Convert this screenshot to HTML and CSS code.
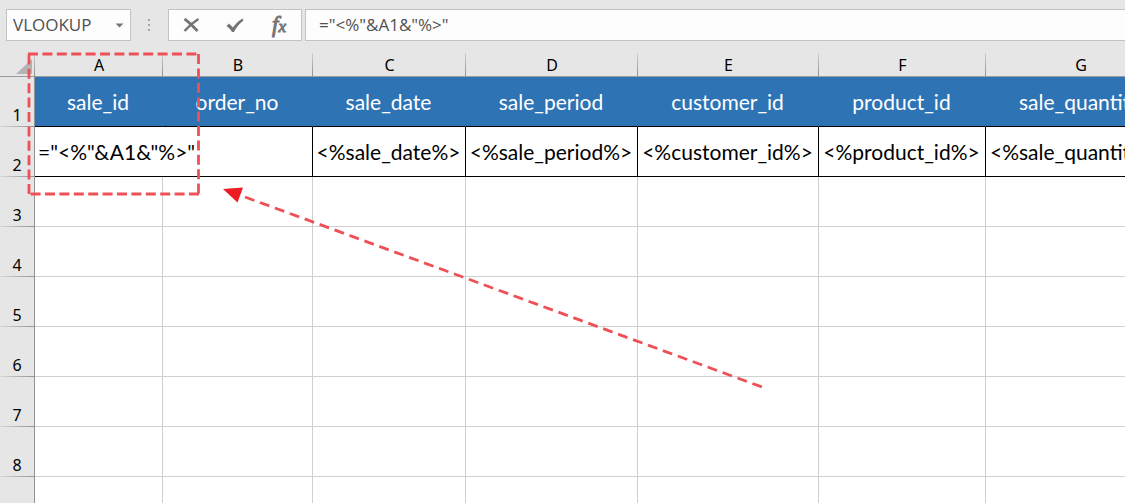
FILE: index.html
```
<!DOCTYPE html>
<html lang="en">
<head>
  <meta charset="UTF-8">
  <meta name="viewport" content="width=device-width, initial-scale=1.0">
  <title>Spreadsheet - VLOOKUP</title>
  <link rel="stylesheet" href="styles.css">
</head>
<body>
  <div class="formula-bar">
    <div class="name-box">
      <input class="name-input" type="text" value="VLOOKUP" aria-label="Name box">
      <button class="name-toggle" aria-label="Open name list">
        <svg width="9" height="5" viewBox="0 0 9 5"><path d="M0.5 0.5h8l-4 4z" fill="#777"/></svg>
      </button>
    </div>
    <svg class="grip" width="3" height="13" viewBox="0 0 3 13" fill="#a6a6a6"><path d="M0 0h2v2H0zM0 5h2v2H0zM0 10h2v2H0z"/></svg>
    <div class="actions">
      <button aria-label="Cancel">
        <svg width="17" height="16" viewBox="0 0 17 16" fill="none" stroke="#757575"><path d="M1.5 2Q6 5 14.5 14" stroke-width="2.8"/><path d="M15.5 2Q8 6.5 1.5 14" stroke-width="2.4"/></svg>
      </button>
      <button aria-label="Enter">
        <svg width="18" height="16" viewBox="0 0 18 16"><path d="M0.5 9L3 6.500L7 10.500Q11 4.500 16.500 1.500L17.500 3.500Q11.500 8 8 15H6Q3.500 11 0.500 9z" fill="#757575"/></svg>
      </button>
      <button class="fx" aria-label="Insert function"><i>f</i><i class="fx-sub">x</i></button>
    </div>
    <input class="formula-input" type="text" value="=&quot;&lt;%&quot;&amp;A1&amp;&quot;%&gt;&quot;" aria-label="Formula">
  </div>

  <div class="sheet">
    <table class="grid">
      <colgroup>
        <col class="col-row"><col class="col-a"><col class="col-b"><col class="col-c"><col class="col-d"><col class="col-e"><col class="col-f"><col class="col-g">
      </colgroup>
      <thead>
        <tr>
          <th class="corner"><svg width="16" height="16" viewBox="0 0 16 16"><path d="M16 0v15H0z" fill="#b4b4b4"/></svg></th>
          <th>A</th><th>B</th><th>C</th><th>D</th><th>E</th><th>F</th><th>G</th>
        </tr>
      </thead>
      <tbody>
        <tr class="titles"><th>1</th><td>sale_id</td><td>order_no</td><td>sale_date</td><td>sale_period</td><td>customer_id</td><td>product_id</td><td>sale_quantity</td></tr>
        <tr class="fields"><th>2</th><td class="editing" colspan="2">="&lt;%"&amp;A1&amp;"%&gt;"</td><td>&lt;%sale_date%&gt;</td><td>&lt;%sale_period%&gt;</td><td>&lt;%customer_id%&gt;</td><td>&lt;%product_id%&gt;</td><td>&lt;%sale_quantity%&gt;</td></tr>
        <tr><th>3</th><td></td><td></td><td></td><td></td><td></td><td></td><td></td></tr>
        <tr><th>4</th><td></td><td></td><td></td><td></td><td></td><td></td><td></td></tr>
        <tr><th>5</th><td></td><td></td><td></td><td></td><td></td><td></td><td></td></tr>
        <tr><th>6</th><td></td><td></td><td></td><td></td><td></td><td></td><td></td></tr>
        <tr><th>7</th><td></td><td></td><td></td><td></td><td></td><td></td><td></td></tr>
        <tr><th>8</th><td></td><td></td><td></td><td></td><td></td><td></td><td></td></tr>
        <tr><th></th><td></td><td></td><td></td><td></td><td></td><td></td><td></td></tr>
      </tbody>
    </table>
  </div>

  <!-- callout box and arrow over the grid -->
  <svg class="callout" width="780" height="400" viewBox="0 0 780 400" fill="none">
    <g stroke="#ee5057" stroke-width="2.8" stroke-dasharray="10 4.4">
      <path d="M28 54H199"/>
      <path d="M198.500 54V194"/>
      <path d="M199 194H29"/>
      <path d="M29 194V54"/>
      <path stroke-dasharray="10 5.900" d="M245 197L762 387"/>
    </g>
    <path d="M223 189L243 187.500L237.500 202.500z" fill="#ed1c24"/>
  </svg>
</body>
</html>
```
FILE: styles.css
```
* { box-sizing: border-box; }
body {
  margin: 0;
  height: 100vh;
  overflow: hidden;
  background: #e6e6e6;
  font-family: "Noto Sans", "Open Sans", sans-serif;
  color: #000;
}
button {
  border: none;
  background: none;
  padding: 0;
  cursor: pointer;
}
input {
  border: none;
  outline: none;
  background: none;
  padding: 0;
  min-width: 0;
  font-family: "Open Sans", "Noto Sans", sans-serif;
  font-size: 17px;
  color: #505050;
}

/* Formula bar */
.formula-bar {
  display: flex;
  align-items: center;
  height: 53px;
  padding: 9px 0 12px 6px;
}
.name-box,
.actions,
.formula-input {
  height: 32px;
  background: #fdfdfd;
  border: 1px solid #c3c3c3;
}
.name-box {
  display: flex;
  width: 125px;
  padding-left: 6px;
}
.name-input {
  flex: 1;
  padding-bottom: 2px;
}
.name-toggle {
  display: flex;
  align-items: center;
  justify-content: center;
  width: 22px;
}
.grip { margin: 0 17px; }
.actions {
  display: flex;
  width: 134px;
  margin-right: 3px;
}
.actions button {
  flex: 1;
  display: flex;
  align-items: center;
  justify-content: center;
}
.actions .fx {
  font-family: "Liberation Serif", serif;
  font-size: 23px;
  line-height: 24px;
  color: #757575;
  -webkit-text-stroke: 1px #757575;
}
.fx .fx-sub {
  font-size: 17px;
  padding-top: 4px;
}
.formula-input {
  flex: 1;
  border-right: none;
  padding: 0 0 2px 13px;
}

/* Grid */
.sheet { overflow: hidden; }
.grid {
  table-layout: fixed;
  width: 1176px;
  border-collapse: separate;
  border-spacing: 0;
}
.col-row { width: 35px; }
.col-a { width: 128px; }
.col-b { width: 150px; }
.col-c { width: 153px; }
.col-d { width: 172px; }
.col-e { width: 181px; }
.col-f { width: 167px; }
.col-g { width: 190px; }
th {
  padding: 0;
  font-size: 16px;
  font-weight: normal;
  line-height: 20px;
}
thead th {
  height: 24px;
  border-bottom: 1px solid #9b9b9b;
  background: linear-gradient(#d0d0d0, #8f8f8f) right / 1px 100% no-repeat;
}
thead .corner {
  padding: 4px 3px 0 0;
  text-align: right;
  line-height: 0;
}
tbody th {
  height: 50px;
  padding-bottom: 2px;
  vertical-align: bottom;
  border-right: 1px solid #929292;
  background: linear-gradient(to right, #d6d6d6, #929292) bottom / 100% 1px no-repeat;
}
td {
  padding: 0 1px 0 0;
  background: #fff;
  border-right: 1px solid #d0d0d0;
  border-bottom: 1px solid #d0d0d0;
  font-family: Lato, sans-serif;
  font-size: 21px;
  text-align: center;
  white-space: nowrap;
}
.titles td {
  background: #2e74b5;
  border-right-color: #2e74b5;
  border-bottom-color: #000;
  color: #fff;
}
.fields td {
  border-color: #000;
}
.fields .editing {
  padding-left: 3px;
  text-align: left;
}

/* Callout */
.callout {
  position: absolute;
  top: 0;
  left: 0;
  pointer-events: none;
}
```
